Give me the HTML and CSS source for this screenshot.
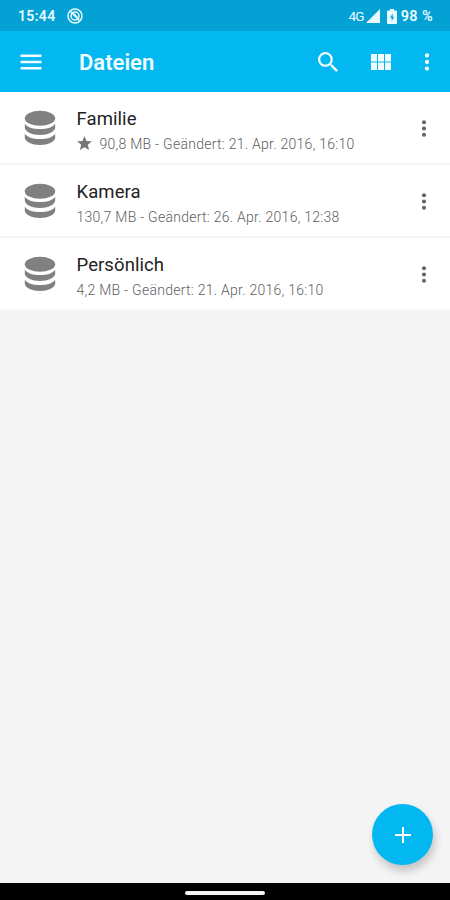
FILE: index.html
```html
<!DOCTYPE html>
<html lang="de">
<head>
<meta charset="utf-8">
<title>Dateien</title>
<link rel="stylesheet" href="styles.css">
</head>
<body>
<svg class="defs" width="0" height="0" aria-hidden="true">
  <symbol id="disks" viewBox="0 0 32 36">
    <ellipse cx="16" cy="8.300" rx="15.2" ry="7.500"/>
    <path d="M.8 13.800C4 17.900 9.500 19.100 16 19.100S28 17.900 31.200 13.800V17.500C31.200 21.500 24 25 16 25S.8 21.500 .8 17.500Z"/>
    <path d="M.8 23.800C4 27.900 9.500 29.100 16 29.100S28 27.900 31.200 23.800V27.500C31.200 31.500 24 35 16 35S.8 31.500 .8 27.500Z"/>
  </symbol>
  <symbol id="dots" viewBox="0 0 6 20">
    <circle cx="3" cy="3.400" r="2.150"/><circle cx="3" cy="10" r="2.150"/><circle cx="3" cy="16.600" r="2.150"/>
  </symbol>
</svg>
<div class="screen">
  <header class="status">
    <span class="clock">15:44</span>
    <svg class="ring" viewBox="0 0 16 16"><circle cx="8" cy="8" r="7"/><circle cx="8" cy="8" r="4"/><path d="M3.500 3.500l9 9M6.500 5.500l4 4"/></svg>
    <span class="network">4G</span>
    <svg class="signal" viewBox="0 0 14 14"><path d="M14 0v14H0z"/></svg>
    <svg class="battery" viewBox="0 0 10 15"><path fill-rule="evenodd" d="M3 0h4v1.500h2q1 0 1 1V14q0 1-1 1H1q-1 0-1-1V2.500q0-1 1-1h2zM5.700 4.500L3 8.800h1.700v3.200l2.500-4.300H5.700z"/></svg>
    <span class="percent">98 %</span>
  </header>
  <nav class="bar">
    <svg class="menu" viewBox="0 0 22 16"><path d="M.5 1.700h21M.5 8h21M.5 14.300h21"/></svg>
    <h1>Dateien</h1>
    <svg class="search" viewBox="3 3 17.500 17.500"><path d="M15.500 14h-.79l-.28-.27A6.471 6.471 0 0 0 16 9.500 6.500 6.500 0 1 0 9.500 16c1.610 0 3.090-.59 4.230-1.570l.27.28v.79l5 4.990L20.490 19l-4.990-5zm-6 0C7.010 14 5 11.990 5 9.500S7.010 5 9.500 5 14 7.010 14 9.500 11.990 14 9.500 14z"/></svg>
    <svg class="grid" viewBox="0 0 20 16"><path d="M0 0h6v7.500H0zM7 0h6v7.500H7zM14 0h6v7.500h-6zM0 8.500h6V16H0zM7 8.500h6V16H7zM14 8.500h6V16h-6z"/></svg>
    <svg class="more"><use href="#dots"/></svg>
  </nav>
  <main class="content">
    <ul class="files">
      <li class="row">
        <svg class="disk"><use href="#disks"/></svg>
        <div class="info"><div class="name">Familie</div>
          <div class="meta"><svg class="star" viewBox="2 2 20 19"><path d="M12 17.270L18.180 21l-1.640-7.030L22 9.240l-7.190-.61L12 2 9.190 8.630 2 9.240l5.460 4.730L5.820 21z"/></svg><span>90,8 MB - Geändert: 21. Apr. 2016, 16:10</span></div></div>
        <svg class="kebab"><use href="#dots"/></svg>
      </li>
      <li class="row">
        <svg class="disk"><use href="#disks"/></svg>
        <div class="info"><div class="name">Kamera</div>
          <div class="meta"><span>130,7 MB - Geändert: 26. Apr. 2016, 12:38</span></div></div>
        <svg class="kebab"><use href="#dots"/></svg>
      </li>
      <li class="row">
        <svg class="disk"><use href="#disks"/></svg>
        <div class="info"><div class="name">Persönlich</div>
          <div class="meta"><span>4,2 MB - Geändert: 21. Apr. 2016, 16:10</span></div></div>
        <svg class="kebab"><use href="#dots"/></svg>
      </li>
    </ul>
    <button class="add" aria-label="Hinzufügen"><svg viewBox="0 0 16 16"><path d="M8 0v16M0 8h16"/></svg></button>
  </main>
  <footer class="home"><div class="pill"></div></footer>
</div>
</body>
</html>
```
FILE: styles.css
```css
* { box-sizing: border-box; }
body { margin: 0; font-family: Roboto, sans-serif; }
svg { display: block; flex: none; fill: currentColor; }
.defs { position: absolute; }
.screen { height: 900px; display: flex; flex-direction: column; overflow: hidden; background: #f4f4f4; }
.status { height: 31px; flex: none; display: flex; align-items: center; padding: 1px 17px 0 18px; background: #03a1d4; color: #e9faff; }
.clock { width: 49px; font-size: 14px; font-weight: 600; letter-spacing: .35px; }
.ring { width: 16px; height: 16px; fill: none; stroke: currentColor; stroke-width: 1.5; }
.network { margin-left: auto; font-size: 13.500px; letter-spacing: -.8px; }
.signal { width: 14px; height: 14px; margin-left: 2px; }
.battery { width: 10px; height: 15px; margin: 0 4px 0 7px; }
.percent { font-size: 14.500px; font-weight: 600; letter-spacing: .35px; }
.bar { height: 61px; flex: none; display: flex; align-items: center; padding: 0 20.500px 0 20px; background: #03b7f1; color: #f0fcff; }
.menu { width: 22px; height: 16px; stroke: currentColor; stroke-width: 2.600; }
.bar h1 { margin: 2px auto 0 37px; font-size: 22px; line-height: 28px; font-weight: 600; letter-spacing: 0; }
.search { width: 20px; height: 20px; margin-right: 33px; }
.grid { width: 20px; height: 16px; margin-right: 32.500px; }
.more { width: 6px; height: 20px; }
.content { flex: 1; position: relative; }
.files { margin: 0; padding: 0; list-style: none; }
.row { height: 73px; display: flex; align-items: flex-start; padding: 18px 23px 0 24px; background: #fff; border-bottom: 2px solid #f6f6f6; }
.disk { width: 32px; height: 36px; color: #808080; }
.info { flex: 1; margin: -3px 0 0 20.500px; }
.name { font-size: 18.500px; line-height: 24px; letter-spacing: .08px; color: #222; }
.meta { display: flex; align-items: center; height: 25px; font-size: 14px; font-weight: 300; letter-spacing: .265px; color: #606060; white-space: nowrap; }
.star { width: 15px; height: 14px; margin: -2px 7.500px 0 .5px; color: #777; }
.kebab { width: 6px; height: 19px; margin-top: 8.500px; color: #656565; }
.add { position: absolute; right: 17px; bottom: 18px; width: 61px; height: 61px; display: grid; place-items: center; padding: 0; border: 0; border-radius: 50%; background: #03b7f1; color: #fff; box-shadow: 2px 6px 9px rgba(0,0,0,.2); }
.add svg { width: 16px; height: 16px; stroke: currentColor; stroke-width: 2; }
.home { height: 17px; flex: none; display: flex; justify-content: center; align-items: center; padding-top: 2px; background: #000; }
.pill { width: 80px; height: 4px; border-radius: 2px; background: #f5f5f5; }
```
